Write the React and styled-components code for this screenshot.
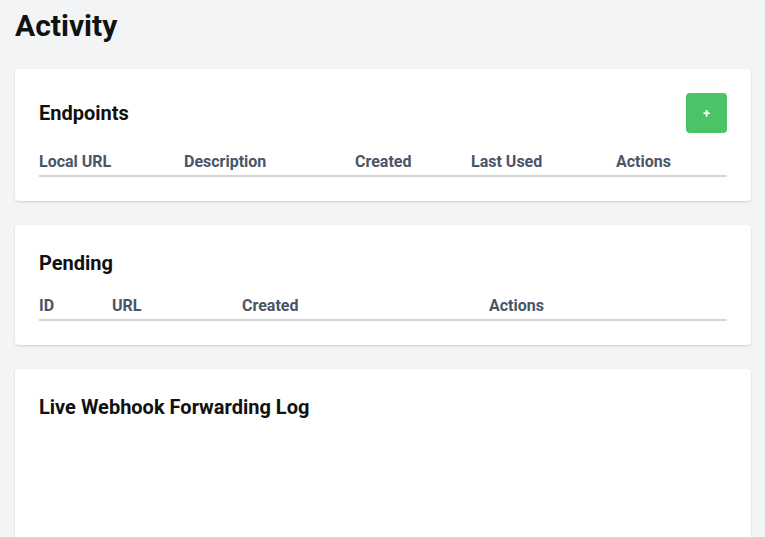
import React from "react";
import styled, { createGlobalStyle } from "styled-components";

const Global = createGlobalStyle`
  body {
    margin: 0;
    background: #f3f4f6;
    font-family: Roboto, "Liberation Sans", sans-serif;
    color: #111;
  }
`;

const Page = styled.div`
  padding: 8px 14px 0 15px;
`;

const Title = styled.h1`
  margin: 0 0 25px;
  font-size: 30px;
  line-height: 36px;
  font-weight: 700;
`;

const Stack = styled.div`
  display: flex;
  flex-direction: column;
  gap: 24px;
`;

const Card = styled.section`
  background: #fff;
  border-radius: 4px;
  box-shadow: 0 1px 3px rgba(0, 0, 0, 0.1), 0 1px 2px rgba(0, 0, 0, 0.06);
  padding: 24px;
  min-height: ${(p) => p.minH || 0}px;
`;

const CardHeader = styled.div`
  display: flex;
  align-items: center;
  justify-content: space-between;
`;

const Heading = styled.h2`
  margin: 0;
  font-size: 20px;
  line-height: 28px;
  font-weight: 700;
`;

const AddButton = styled.button`
  width: 41px;
  height: 40px;
  border: none;
  border-radius: 4px;
  background: #4ac466;
  color: #fff;
  font-family: inherit;
  font-size: 13px;
  font-weight: 700;
  padding: 0;
  cursor: pointer;
`;

const Table = styled.table`
  width: 100%;
  border-collapse: collapse;
  table-layout: fixed;
`;

const Col = styled.col`
  width: ${(p) => p.w}px;
`;

const Th = styled.th`
  text-align: left;
  padding: 17px 0 1px;
  font-size: 16px;
  line-height: 24px;
  font-weight: 700;
  color: #4a5568;
  border-bottom: 2px solid #d2d6dc;
  white-space: nowrap;
`;

const HeaderTable = ({ columns }) => (
  <Table>
    <colgroup>
      {columns.map((c) => (
        <Col key={c.label} w={c.w} />
      ))}
    </colgroup>
    <thead>
      <tr>
        {columns.map((c) => (
          <Th key={c.label}>{c.label}</Th>
        ))}
      </tr>
    </thead>
    <tbody />
  </Table>
);

const endpointCols = [
  { label: "Local URL", w: 145 },
  { label: "Description", w: 171 },
  { label: "Created", w: 116 },
  { label: "Last Used", w: 145 },
  { label: "Actions", w: 111 },
];

const pendingCols = [
  { label: "ID", w: 73 },
  { label: "URL", w: 130 },
  { label: "Created", w: 247 },
  { label: "Actions", w: 238 },
];

export default function App() {
  return (
    <Page>
      <Global />
      <Title>Activity</Title>
      <Stack>
        <Card>
          <CardHeader>
            <Heading>Endpoints</Heading>
            <AddButton>+</AddButton>
          </CardHeader>
          <HeaderTable columns={endpointCols} />
        </Card>
        <Card>
          <Heading>Pending</Heading>
          <HeaderTable columns={pendingCols} />
        </Card>
        <Card minH={240}>
          <Heading>Live Webhook Forwarding Log</Heading>
        </Card>
      </Stack>
    </Page>
  );
}
